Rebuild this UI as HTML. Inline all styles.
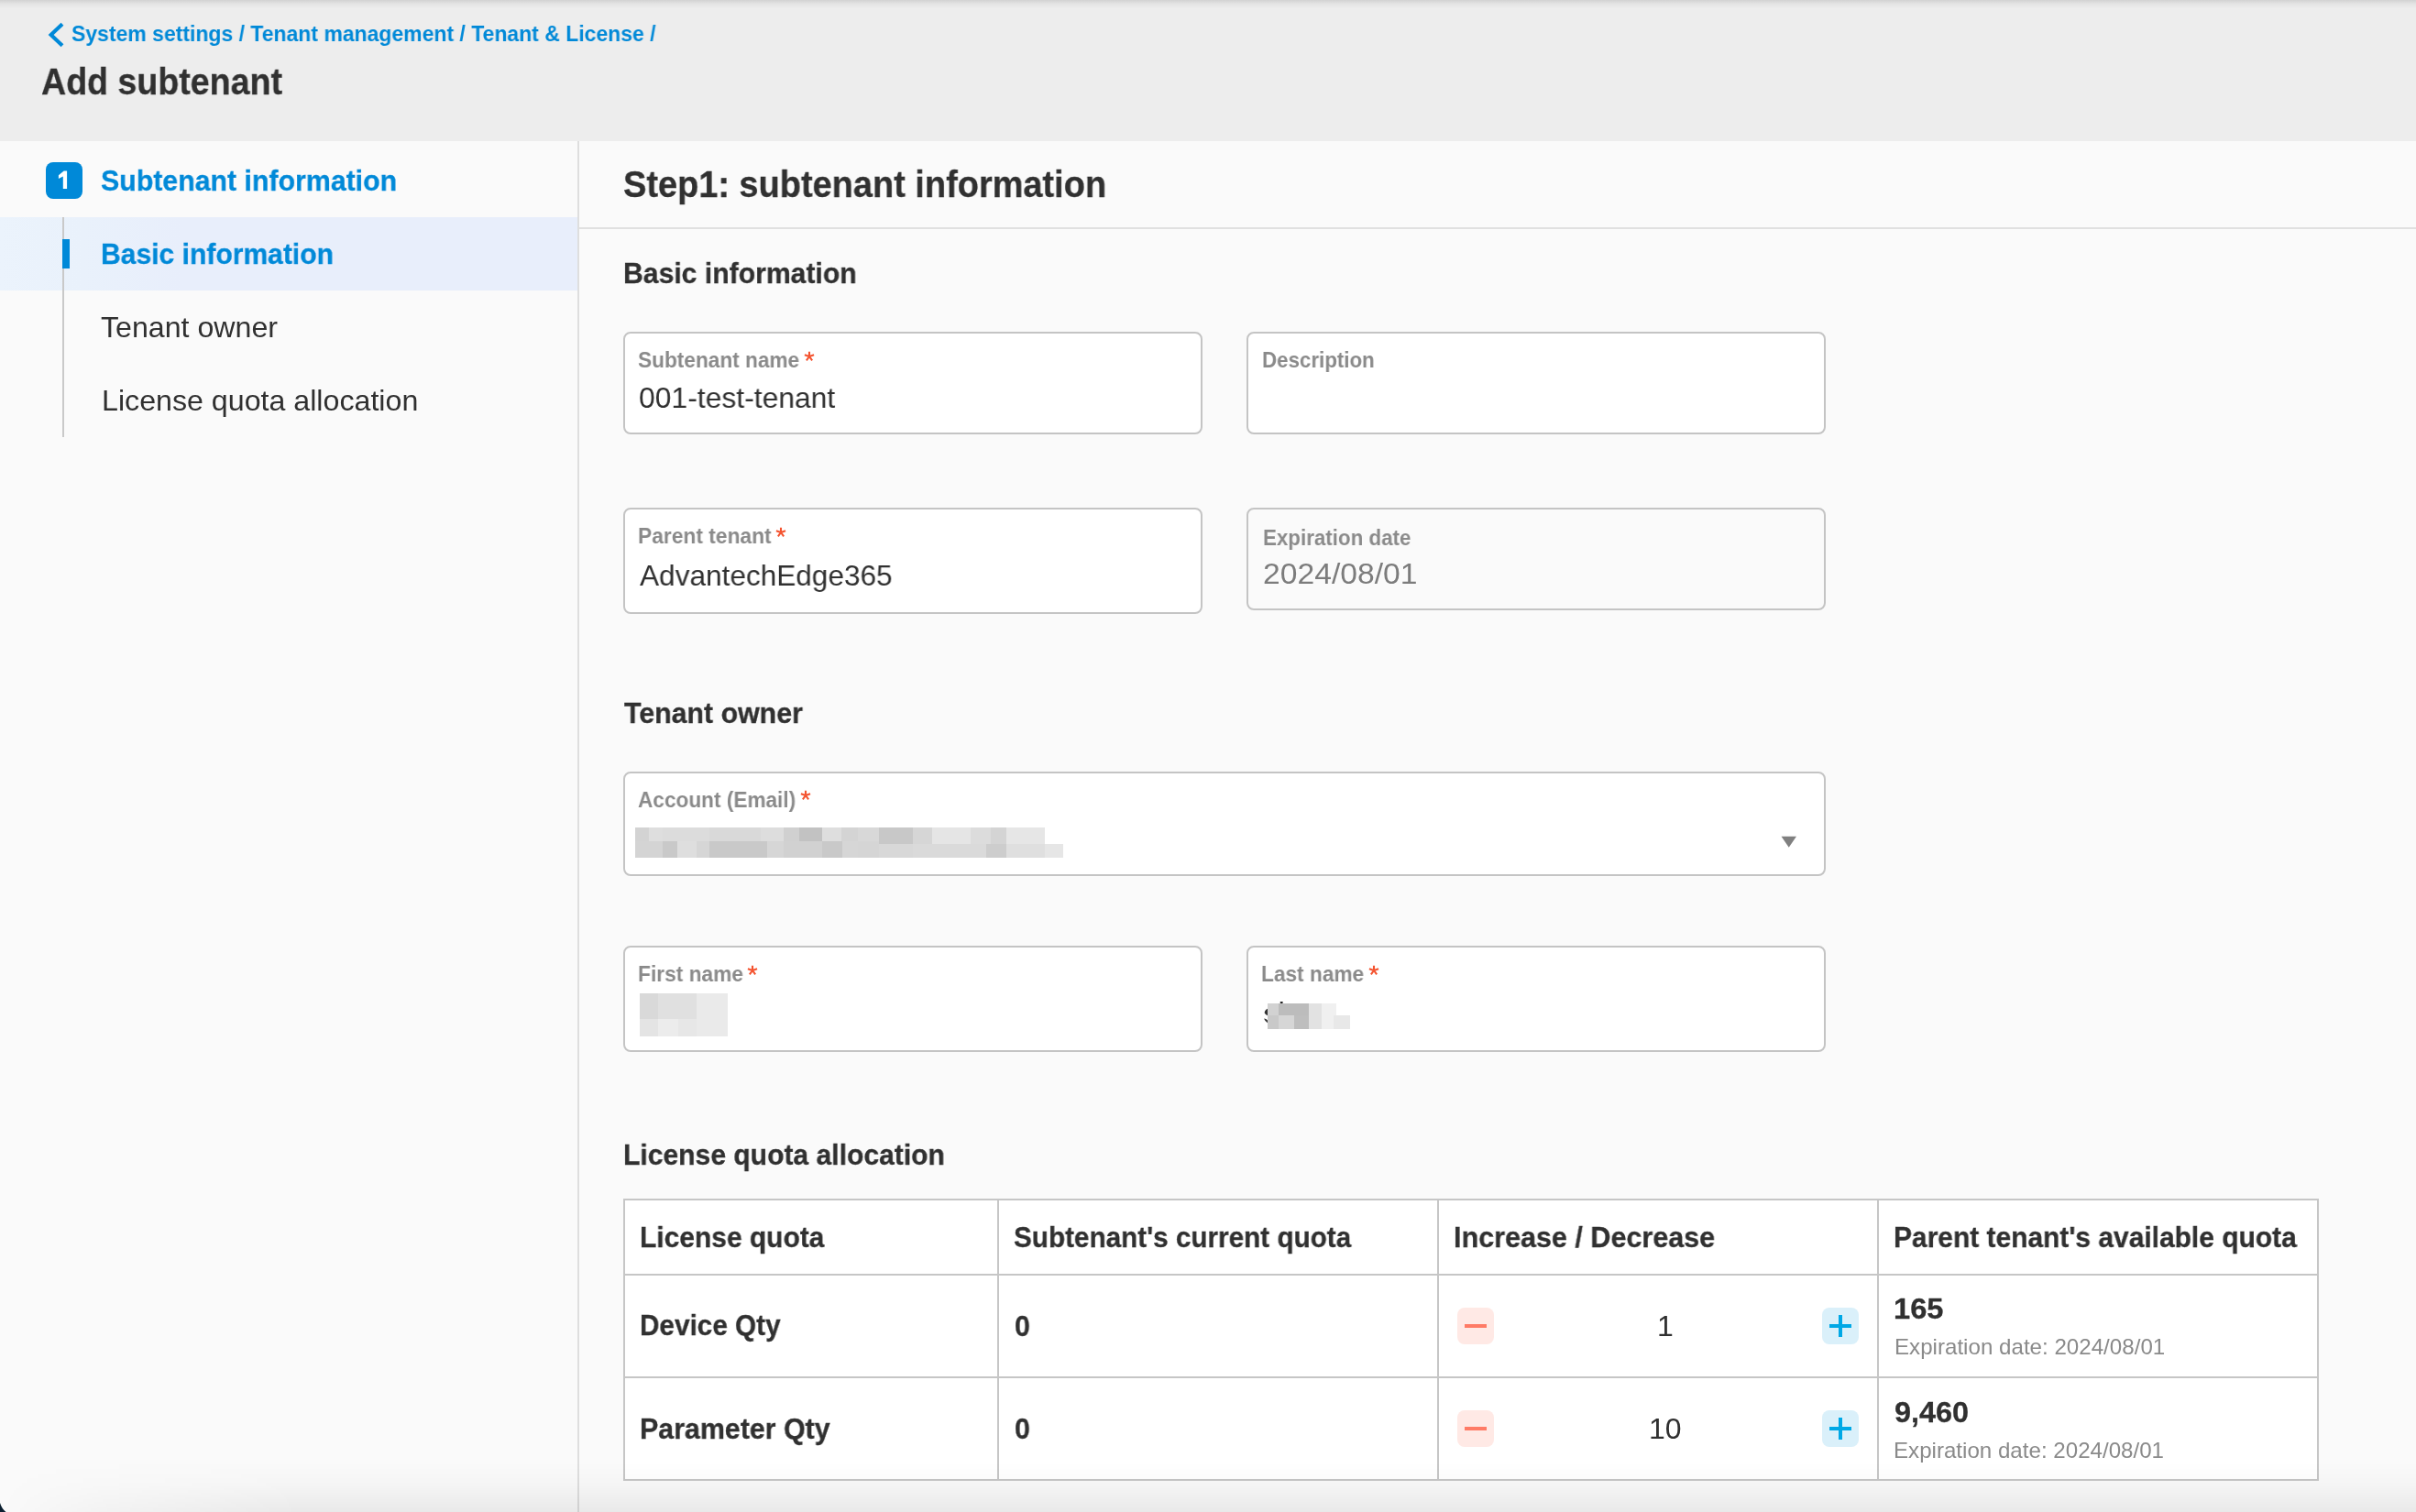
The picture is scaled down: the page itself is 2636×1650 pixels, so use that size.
<!DOCTYPE html>
<html lang="en">
<head>
<meta charset="utf-8">
<title>Add subtenant</title>
<style>
html,body{margin:0;padding:0}
body{width:2636px;height:1650px;overflow:hidden;position:relative;background:#fafafa;font-family:"Liberation Sans",sans-serif}
.a{position:absolute}
.t{position:absolute;white-space:pre;line-height:1;transform-origin:0 0;will-change:transform;font-family:"Liberation Sans",sans-serif}
.b{-webkit-text-stroke:0.3px}
.hdr{left:0;top:0;width:2636px;height:154px;background:#ededed}
.topsh{left:0;top:0;width:2636px;height:9px;background:linear-gradient(to bottom,rgba(0,0,0,.115),rgba(0,0,0,.045) 45%,rgba(0,0,0,0))}
.botsh{left:0;top:1596px;width:2636px;height:54px;background:linear-gradient(to bottom,rgba(0,0,0,0),rgba(0,0,0,.02) 45%,rgba(0,0,0,.065));-webkit-mask-image:linear-gradient(to right,rgba(0,0,0,0) 0,rgba(0,0,0,.45) 110px,rgba(0,0,0,1) 330px);mask-image:linear-gradient(to right,rgba(0,0,0,0) 0,rgba(0,0,0,.45) 110px,rgba(0,0,0,1) 330px)}
.side{left:0;top:154px;width:630px;height:1496px;background:#fafafa}
.sideb{left:630px;top:154px;width:2px;height:1496px;background:#dedede}
.sel{left:0;top:237px;width:630px;height:80px;background:linear-gradient(to right,#ebf3fc 0,#e9f1fb 90px,#e8eefb 200px)}
.vline{left:68px;top:237px;width:2px;height:240px;background:#c9c9c9}
.bar{left:68px;top:261px;width:8px;height:32px;background:#0089d8}
.badge{left:50px;top:177px;width:40px;height:40px;border-radius:8px;background:#0089d8}
.hline{left:632px;top:248px;width:2004px;height:2px;background:#e0e0e0}
.box{box-sizing:border-box;border:2px solid #c4c4c4;border-radius:8px;background:#fff}
.dis{background:#fafafa}
.tbl{left:680px;top:1308px;width:1850px;height:308px;background:#fff;box-sizing:border-box;border:2px solid #c6c6c6}
.ln{background:#c6c6c6}
.btn{width:40px;height:40px;border-radius:8px}
.minus{background:#ffe9e5}
.plus{background:#daf0fa}
.mbar{left:8px;top:18px;width:24px;height:4px;background:#ff7b66}
.ph{left:8px;top:18px;width:24px;height:4px;background:#00a8e6}
.pv{left:18px;top:8px;width:4px;height:24px;background:#00a8e6}
</style>
</head>
<body>
<div class="a hdr"></div>
<div class="a topsh"></div>
<div class="a side"></div>
<div class="a sel"></div>
<div class="a sideb"></div>
<div class="a vline"></div>
<div class="a bar"></div>
<div class="a badge"><svg class="a" style="left:0;top:0" width="40" height="40" viewBox="0 0 40 40"><path d="M23.1 9.5 L23.1 29.1 L18.8 29.1 L18.8 15.5 L13.9 18.1 L13.9 14.2 L19.7 9.5 Z" fill="#fff"/></svg></div>
<div class="a hline"></div>
<svg class="a" style="left:50px;top:22px" width="24" height="32" viewBox="0 0 24 32"><path d="M18 4.2 L5.6 16 L18 27.8" fill="none" stroke="#0089d8" stroke-width="4.1"/></svg>

<!-- input boxes -->
<div class="a box" style="left:680px;top:362px;width:632px;height:112px"></div>
<div class="a box" style="left:1360px;top:362px;width:632px;height:112px"></div>
<div class="a box" style="left:680px;top:554px;width:632px;height:116px"></div>
<div class="a box dis" style="left:1360px;top:554px;width:632px;height:112px"></div>
<div class="a box" style="left:680px;top:842px;width:1312px;height:114px"></div>
<div class="a box" style="left:680px;top:1032px;width:632px;height:116px"></div>
<div class="a box" style="left:1360px;top:1032px;width:632px;height:116px"></div>
<svg class="a" style="left:1943px;top:912px" width="18" height="14" viewBox="0 0 18 14"><path d="M0.5 0.8 H17 L8.75 12.8 Z" fill="#808080"/></svg>

<!-- table -->
<div class="a tbl"></div>
<div class="a ln" style="left:682px;top:1390px;width:1846px;height:2px"></div>
<div class="a ln" style="left:682px;top:1502px;width:1846px;height:2px"></div>
<div class="a ln" style="left:1088px;top:1310px;width:2px;height:304px"></div>
<div class="a ln" style="left:1568px;top:1310px;width:2px;height:304px"></div>
<div class="a ln" style="left:2048px;top:1310px;width:2px;height:304px"></div>

<div class="a btn minus" style="left:1590px;top:1427px"><div class="a mbar"></div></div>
<div class="a btn plus" style="left:1988px;top:1427px"><div class="a ph"></div><div class="a pv"></div></div>
<div class="a btn minus" style="left:1590px;top:1539px"><div class="a mbar"></div></div>
<div class="a btn plus" style="left:1988px;top:1539px"><div class="a ph"></div><div class="a pv"></div></div>

<svg class="a" style="left:0;top:0" width="2636" height="1650" shape-rendering="crispEdges">
<rect x="693" y="903" width="15" height="15" fill="#d3d3d3"/>
<rect x="708" y="903" width="15" height="15" fill="#dedede"/>
<rect x="723" y="903" width="51" height="15" fill="#dcdcdc"/>
<rect x="774" y="903" width="56" height="15" fill="#d9d9d9"/>
<rect x="830" y="903" width="25" height="15" fill="#dddddd"/>
<rect x="855" y="903" width="17" height="15" fill="#d0d0d0"/>
<rect x="872" y="903" width="25" height="15" fill="#c2c2c2"/>
<rect x="897" y="903" width="21" height="15" fill="#dedede"/>
<rect x="918" y="903" width="18" height="15" fill="#d4d4d4"/>
<rect x="936" y="903" width="23" height="15" fill="#d8d8d8"/>
<rect x="959" y="903" width="37" height="18" fill="#c8c8c8"/>
<rect x="996" y="903" width="21" height="18" fill="#d6d6d6"/>
<rect x="1017" y="903" width="42" height="18" fill="#e5e5e5"/>
<rect x="1059" y="903" width="22" height="18" fill="#dcdcdc"/>
<rect x="1081" y="903" width="17" height="18" fill="#d4d4d4"/>
<rect x="1098" y="903" width="42" height="18" fill="#e6e6e6"/>
<rect x="693" y="918" width="30" height="18" fill="#d4d4d4"/>
<rect x="723" y="918" width="16" height="18" fill="#c9c9c9"/>
<rect x="739" y="918" width="21" height="18" fill="#dedede"/>
<rect x="760" y="918" width="14" height="18" fill="#d6d6d6"/>
<rect x="774" y="918" width="63" height="18" fill="#c9c9c9"/>
<rect x="837" y="918" width="18" height="18" fill="#d6d6d6"/>
<rect x="855" y="918" width="42" height="18" fill="#d1d1d1"/>
<rect x="897" y="918" width="22" height="18" fill="#c9c9c9"/>
<rect x="919" y="918" width="17" height="18" fill="#d6d6d6"/>
<rect x="936" y="918" width="23" height="18" fill="#d5d5d5"/>
<rect x="959" y="921" width="37" height="15" fill="#d8d8d8"/>
<rect x="996" y="921" width="80" height="15" fill="#dadada"/>
<rect x="1076" y="921" width="22" height="15" fill="#cdcdcd"/>
<rect x="1098" y="921" width="42" height="15" fill="#dfdfdf"/>
<rect x="1140" y="921" width="20" height="15" fill="#e6e6e6"/>
<rect x="698" y="1084" width="20" height="28" fill="#d9d9d9"/>
<rect x="718" y="1084" width="42" height="28" fill="#e0e0e0"/>
<rect x="760" y="1084" width="34" height="47" fill="#eaeaea"/>
<rect x="698" y="1112" width="20" height="19" fill="#e4e4e4"/>
<rect x="718" y="1112" width="22" height="19" fill="#ececec"/>
<rect x="740" y="1112" width="20" height="19" fill="#e7e7e7"/>
<rect x="1383" y="1095" width="12" height="13" fill="#d2d2d2"/>
<rect x="1395" y="1095" width="33" height="13" fill="#bcbcbc"/>
<rect x="1428" y="1095" width="14" height="28" fill="#e2e2e2"/>
<rect x="1442" y="1095" width="16" height="13" fill="#f0f0f0"/>
<rect x="1383" y="1108" width="12" height="15" fill="#c9c9c9"/>
<rect x="1395" y="1108" width="17" height="15" fill="#d6d6d6"/>
<rect x="1412" y="1108" width="16" height="15" fill="#bebebe"/>
<rect x="1442" y="1108" width="13" height="15" fill="#f0f0f0"/>
<rect x="1455" y="1108" width="18" height="15" fill="#e8e8e8"/>
</svg>
<svg class="a" style="left:1376px;top:1090px" width="30" height="30" viewBox="0 0 30 30"><path d="M7 10.8 Q3.2 13 3.8 15.5 Q4.4 17.3 7 18.2 Z" fill="#333"/><path d="M7 26.3 Q4.5 25 3 21.6 Q5.5 21.6 7 23.5 Z" fill="#333"/><rect x="20.6" y="2.9" width="3.2" height="2" rx="0.8" fill="#222"/></svg>
<span class="t" style="left:77.88px;top:24.50px;font-size:24px;font-weight:700;color:#0089d8;transform:scaleX(0.9573)">System settings / Tenant management / Tenant &amp; License /</span>
<span class="t b" style="left:45.26px;top:68.70px;font-size:40px;font-weight:700;color:#303030;transform:scaleX(0.9393)">Add subtenant</span>
<span class="t b" style="left:110.25px;top:180.60px;font-size:32px;font-weight:700;color:#0089d8;transform:scaleX(0.9466)">Subtenant information</span>
<span class="t b" style="left:110.19px;top:261.10px;font-size:32px;font-weight:700;color:#0089d8;transform:scaleX(0.9395)">Basic information</span>
<span class="t" style="left:110.45px;top:341.00px;font-size:32px;font-weight:400;color:#303030;transform:scaleX(1.0045)">Tenant owner</span>
<span class="t" style="left:110.83px;top:421.00px;font-size:32px;font-weight:400;color:#303030;transform:scaleX(1.0056)">License quota allocation</span>
<span class="t b" style="left:679.61px;top:181.00px;font-size:40px;font-weight:700;color:#303030;transform:scaleX(0.9486)">Step1: subtenant information</span>
<span class="t b" style="left:680.38px;top:281.70px;font-size:32px;font-weight:700;color:#303030;transform:scaleX(0.9421)">Basic information</span>
<span class="t" style="left:696.49px;top:380.80px;font-size:24px;font-weight:700;color:#8a8a8a;transform:scaleX(0.9436)">Subtenant name</span>
<span class="t" style="left:696.56px;top:417.70px;font-size:32px;font-weight:400;color:#303030;transform:scaleX(0.9956)">001-test-tenant</span>
<span class="t" style="left:1376.61px;top:380.80px;font-size:24px;font-weight:700;color:#8a8a8a;transform:scaleX(0.9295)">Description</span>
<span class="t" style="left:695.88px;top:573.40px;font-size:24px;font-weight:700;color:#8a8a8a;transform:scaleX(0.9498)">Parent tenant</span>
<span class="t" style="left:698.40px;top:611.50px;font-size:32px;font-weight:400;color:#303030;transform:scaleX(0.9867)">AdvantechEdge365</span>
<span class="t" style="left:1377.90px;top:575.00px;font-size:24px;font-weight:700;color:#8a8a8a;transform:scaleX(0.9310)">Expiration date</span>
<span class="t" style="left:1378.22px;top:610.00px;font-size:32px;font-weight:400;color:#7c7c7c;transform:scaleX(1.0522)">2024/08/01</span>
<span class="t b" style="left:680.56px;top:762.00px;font-size:32px;font-weight:700;color:#303030;transform:scaleX(0.9473)">Tenant owner</span>
<span class="t" style="left:696.39px;top:860.50px;font-size:24px;font-weight:700;color:#8a8a8a;transform:scaleX(0.9422)">Account (Email)</span>
<span class="t" style="left:695.68px;top:1051.00px;font-size:24px;font-weight:700;color:#8a8a8a;transform:scaleX(0.9471)">First name</span>
<span class="t" style="left:1376.28px;top:1051.00px;font-size:24px;font-weight:700;color:#8a8a8a;transform:scaleX(0.9451)">Last name</span>
<span class="t b" style="left:679.99px;top:1243.70px;font-size:32px;font-weight:700;color:#303030;transform:scaleX(0.9397)">License quota allocation</span>
<span class="t b" style="left:698.39px;top:1334.00px;font-size:32px;font-weight:700;color:#303030;transform:scaleX(0.9362)">License quota</span>
<span class="t b" style="left:1106.07px;top:1334.40px;font-size:32px;font-weight:700;color:#303030;transform:scaleX(0.9274)">Subtenant's current quota</span>
<span class="t b" style="left:1586.15px;top:1334.40px;font-size:32px;font-weight:700;color:#303030;transform:scaleX(0.9540)">Increase / Decrease</span>
<span class="t b" style="left:2066.30px;top:1334.40px;font-size:32px;font-weight:700;color:#303030;transform:scaleX(0.9355)">Parent tenant's available quota</span>
<span class="t b" style="left:698.41px;top:1430.30px;font-size:32px;font-weight:700;color:#303030;transform:scaleX(0.9282)">Device Qty</span>
<span class="t b" style="left:1106.62px;top:1430.60px;font-size:32px;font-weight:700;color:#303030;transform:scaleX(0.9500)">0</span>
<span class="t" style="left:1807.67px;top:1430.50px;font-size:32px;font-weight:400;color:#303030;transform:scaleX(1.0000)">1</span>
<span class="t b" style="left:2066.46px;top:1412.40px;font-size:32px;font-weight:700;color:#303030;transform:scaleX(1.0198)">165</span>
<span class="t" style="left:2066.69px;top:1458.20px;font-size:24px;font-weight:400;color:#8a8a8a;transform:scaleX(1.0057)">Expiration date: 2024/08/01</span>
<span class="t b" style="left:698.36px;top:1542.70px;font-size:32px;font-weight:700;color:#303030;transform:scaleX(0.9489)">Parameter Qty</span>
<span class="t b" style="left:1106.62px;top:1543.00px;font-size:32px;font-weight:700;color:#303030;transform:scaleX(0.9500)">0</span>
<span class="t" style="left:1798.68px;top:1542.60px;font-size:32px;font-weight:400;color:#303030;transform:scaleX(1.0000)">10</span>
<span class="t b" style="left:2066.59px;top:1525.20px;font-size:32px;font-weight:700;color:#303030;transform:scaleX(1.0135)">9,460</span>
<span class="t" style="left:2066.29px;top:1571.20px;font-size:24px;font-weight:400;color:#8a8a8a;transform:scaleX(1.0050)">Expiration date: 2024/08/01</span>
<svg class="a" style="left:875.00px;top:380.80px" width="16" height="16" viewBox="0 0 16 16"><path d="M8 8 L8.00 2.65 M8 8 L13.09 6.35 M8 8 L2.91 6.35 M8 8 L11.14 12.33 M8 8 L4.86 12.33" stroke="#f4532f" stroke-width="2.1" fill="none"/></svg>
<svg class="a" style="left:844.30px;top:573.20px" width="16" height="16" viewBox="0 0 16 16"><path d="M8 8 L8.00 2.65 M8 8 L13.09 6.35 M8 8 L2.91 6.35 M8 8 L11.14 12.33 M8 8 L4.86 12.33" stroke="#f4532f" stroke-width="2.1" fill="none"/></svg>
<svg class="a" style="left:871.40px;top:860.20px" width="16" height="16" viewBox="0 0 16 16"><path d="M8 8 L8.00 2.65 M8 8 L13.09 6.35 M8 8 L2.91 6.35 M8 8 L11.14 12.33 M8 8 L4.86 12.33" stroke="#f4532f" stroke-width="2.1" fill="none"/></svg>
<svg class="a" style="left:813.00px;top:1051.00px" width="16" height="16" viewBox="0 0 16 16"><path d="M8 8 L8.00 2.65 M8 8 L13.09 6.35 M8 8 L2.91 6.35 M8 8 L11.14 12.33 M8 8 L4.86 12.33" stroke="#f4532f" stroke-width="2.1" fill="none"/></svg>
<svg class="a" style="left:1490.50px;top:1051.00px" width="16" height="16" viewBox="0 0 16 16"><path d="M8 8 L8.00 2.65 M8 8 L13.09 6.35 M8 8 L2.91 6.35 M8 8 L11.14 12.33 M8 8 L4.86 12.33" stroke="#f4532f" stroke-width="2.1" fill="none"/></svg>
<div class="a botsh"></div>
<svg class="a" style="left:0;top:1640px" width="8" height="10" viewBox="0 0 8 10"><path d="M0 0 V10 H6.5 Q1.8 6.2 0 0 Z" fill="#0c1f30"/></svg>
</body>
</html>
